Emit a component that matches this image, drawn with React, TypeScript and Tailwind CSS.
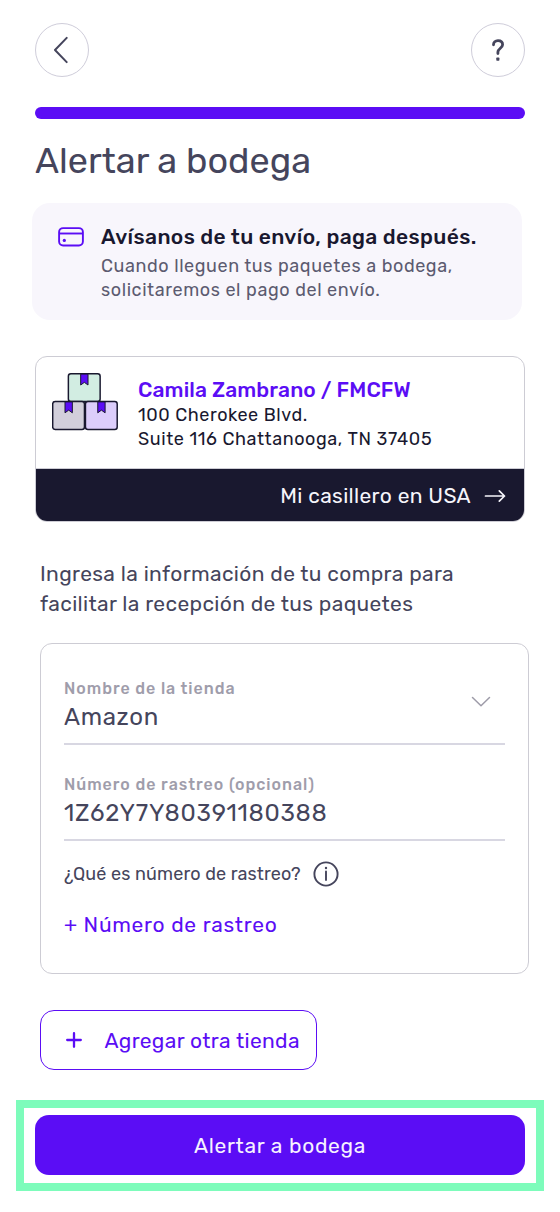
import type { ReactNode } from 'react';

function RoundButton({ label, children }: { label: string; children: ReactNode }) {
  return (
    <button
      aria-label={label}
      className="flex size-[54px] items-center justify-center rounded-full border-[1.5px] border-[#cfcdda] text-[#45455c]"
    >
      {children}
    </button>
  );
}

function Boxes() {
  const box = 'M3.5 1H30.5Q33 1 33 3.5V26.5Q33 29 30.5 29H3.5Q1 29 1 26.5V3.5Q1 1 3.5 1Z';
  const ribbon = 'M13.4 1.3H20.8V12.3L17.1 9.6L13.4 12.3Z';
  const items = [
    { x: 15.8, y: 0, fill: '#d2ede2' },
    { x: 0, y: 28, fill: '#d2cfdb' },
    { x: 33, y: 28, fill: '#dccdfb' },
  ];
  return (
    <svg width="66" height="58" viewBox="0.3 0.4 66.5 58" fill="none" className="shrink-0">
      {items.map((b) => (
        <g key={b.x} transform={`translate(${b.x} ${b.y})`} stroke="#19182f" strokeWidth="1.5">
          <path d={box} fill={b.fill} />
          <path d={ribbon} fill="#5b0df5" strokeWidth="1" />
        </g>
      ))}
    </svg>
  );
}

export default function App() {
  return (
    <main className="flex h-[1212px] w-[560px] flex-col overflow-hidden bg-white font-['Rubik','Roboto',sans-serif] text-[#45455c]">
      <header className="mx-[35px] mt-[23px] flex justify-between">
        <RoundButton label="Volver">
          <svg width="15" height="28" viewBox="0 0 15 28" fill="none" className="-ml-[3px]">
            <path d="M13.7 1.9L2 14L13.7 26.1" stroke="currentColor" strokeWidth="2" strokeLinecap="round" strokeLinejoin="round" />
          </svg>
        </RoundButton>
        <RoundButton label="Ayuda">
          <svg width="14" height="24" viewBox="0 0 14 24" fill="none">
            <path
              d="M2.5 6.8C2.5 4.4 4.3 2.7 7 2.7C9.8 2.7 11.6 4.4 11.6 6.8C11.6 9.9 6.9 10.6 6.9 14V15.5"
              stroke="currentColor"
              strokeWidth="2.8"
              strokeLinecap="round"
            />
            <rect x="5.3" y="19.6" width="3.1" height="3.1" rx=".6" fill="currentColor" />
          </svg>
        </RoundButton>
      </header>

      <div className="mx-[35px] mt-[30px] h-3 shrink-0 rounded-full bg-[#5b0df5]" />

      <h1 className="mt-[22px] ml-[35px] text-[36px] leading-10">Alertar a bodega</h1>

      <section className="mt-[22px] ml-[32px] flex h-[117px] w-[490px] shrink-0 rounded-[18px] bg-[#f8f6fc] pt-[19px] pl-[26px]">
        <svg width="26" height="20" viewBox="0 0 26 20" fill="none" className="mt-[5px] shrink-0" stroke="#5b0df5" strokeWidth="1.9">
          <rect x="1.1" y="1.1" width="23.8" height="17.4" rx="4" />
          <path d="M1.1 6.5H24.9" />
          <circle cx="6.3" cy="13.4" r="1.6" fill="#5b0df5" stroke="none" />
        </svg>
        <div className="ml-[17px] whitespace-nowrap">
          <h2 className="text-[21px] leading-[30px] font-medium tracking-[0.36px] text-[#19182f]">
            Avísanos de tu envío, paga después.
          </h2>
          <p className="mt-[2px] text-lg leading-6 tracking-[0.58px] text-[#5c5b70]">Cuando lleguen tus paquetes a bodega,</p>
          <p className="text-lg leading-6 tracking-[0.59px] text-[#5c5b70]">solicitaremos el pago del envío.</p>
        </div>
      </section>

      <section className="mt-[36px] ml-[35px] flex h-[166px] w-[490px] shrink-0 flex-col overflow-hidden rounded-[12px] border-[1.5px] border-[#cdccd4]">
        <div className="flex h-[111px] shrink-0 pt-4 pl-4">
          <Boxes />
          <div className="mt-[2.5px] ml-[20px] whitespace-nowrap text-[#19182f]">
            <h2 className="text-[21px] leading-[27px] font-medium tracking-[0.11px] text-[#5b0df5]">Camila Zambrano / FMCFW</h2>
            <p className="text-lg leading-6 tracking-[0.56px]">100 Cherokee Blvd.</p>
            <p className="text-lg leading-6 tracking-[0.58px]">Suite 116 Chattanooga, TN 37405</p>
          </div>
        </div>
        <a className="flex grow items-center justify-end border-t border-[#cdccd4] bg-[#19182f] pt-[2px] pr-[18px] text-[#f6f5fb]">
          <span className="text-[21px] leading-7 tracking-[0.35px]">Mi casillero en USA</span>
          <svg width="22" height="14" viewBox="0 0 22 14" fill="none" className="ml-[13px]" stroke="currentColor" strokeWidth="1.7" strokeLinecap="round" strokeLinejoin="round">
            <path d="M1.5 7H20.5M15.3 1.8L20.5 7L15.3 12.2" />
          </svg>
        </a>
      </section>

      <p className="mt-[37px] ml-[40px] text-[21px] leading-[30px] tracking-[0.35px] whitespace-nowrap">
        <span className="block">Ingresa la información de tu compra para</span>
        <span className="block">facilitar la recepción de tus paquetes</span>
      </p>

      <section className="mt-6 ml-[40px] flex h-[331px] w-[489px] shrink-0 flex-col rounded-[12px] border-[1.5px] border-[#cdccd4] px-[23px] whitespace-nowrap">
        <div className="mt-[35px] flex h-[66px] shrink-0 justify-between border-b-2 border-[#d8d7e2]">
          <div>
            <label className="block text-base leading-5 font-medium tracking-[0.97px] text-[#9f9dab]">Nombre de la tienda</label>
            <div className="mt-[3px] text-[24px] leading-[30px] tracking-[0.65px]">Amazon</div>
          </div>
          <svg width="20" height="12" viewBox="0 0 20 12" fill="none" className="mt-[17px] mr-[14px]" stroke="#9d9ba8" strokeWidth="1.5" strokeLinecap="round" strokeLinejoin="round">
            <path d="M1.5 1.5L10 9.7L18.5 1.5" />
          </svg>
        </div>
        <div className="mt-[30px] h-[66px] shrink-0 border-b-2 border-[#d8d7e2]">
          <label className="block text-base leading-5 font-medium tracking-[0.98px] text-[#9f9dab]">Número de rastreo (opcional)</label>
          <div className="mt-[3px] text-[24px] leading-[30px] tracking-[0.71px]">1Z62Y7Y80391180388</div>
        </div>
        <div className="mt-[21px] flex h-6 shrink-0 items-center">
          <span className="text-lg leading-6 tracking-[0.12px]">¿Qué es número de rastreo?</span>
          <svg width="26" height="26" viewBox="0 0 26 26" fill="none" className="ml-[12px]">
            <circle cx="13" cy="13" r="11.6" stroke="#45455c" strokeWidth="1.9" />
            <path d="M13 10.5V19" stroke="#45455c" strokeWidth="1.9" strokeLinecap="round" />
            <circle cx="13" cy="7" r="1.2" fill="#45455c" />
          </svg>
        </div>
        <a className="mt-6 text-[21px] leading-[30px] tracking-[0.7px] text-[#5b0df5]">+ Número de rastreo</a>
      </section>

      <button className="mt-[36px] ml-[39.5px] flex h-[60px] w-[277px] shrink-0 items-center rounded-[14px] border-[1.5px] border-[#5b0df5] pl-[25px] whitespace-nowrap text-[#5b0df5]">
        <svg width="16" height="16" viewBox="0 0 16 16" fill="none" stroke="currentColor" strokeWidth="2.3" strokeLinecap="round">
          <path d="M8 1.2V14.8M1.2 8H14.8" />
        </svg>
        <span className="mt-[2px] ml-[23px] text-[21px] leading-7 tracking-[0.34px]">Agregar otra tienda</span>
      </button>

      <footer className="mx-4 mt-[30px] h-[91px] shrink-0 border-8 border-[#7dfcbb] px-[11px] pt-[7px]">
        <button className="h-[60px] w-full rounded-[14px] bg-[#5b0df5] pt-[2px] text-[21px] leading-7 tracking-[0.7px] text-[#f6f2ff]">
          Alertar a bodega
        </button>
      </footer>
    </main>
  );
}
